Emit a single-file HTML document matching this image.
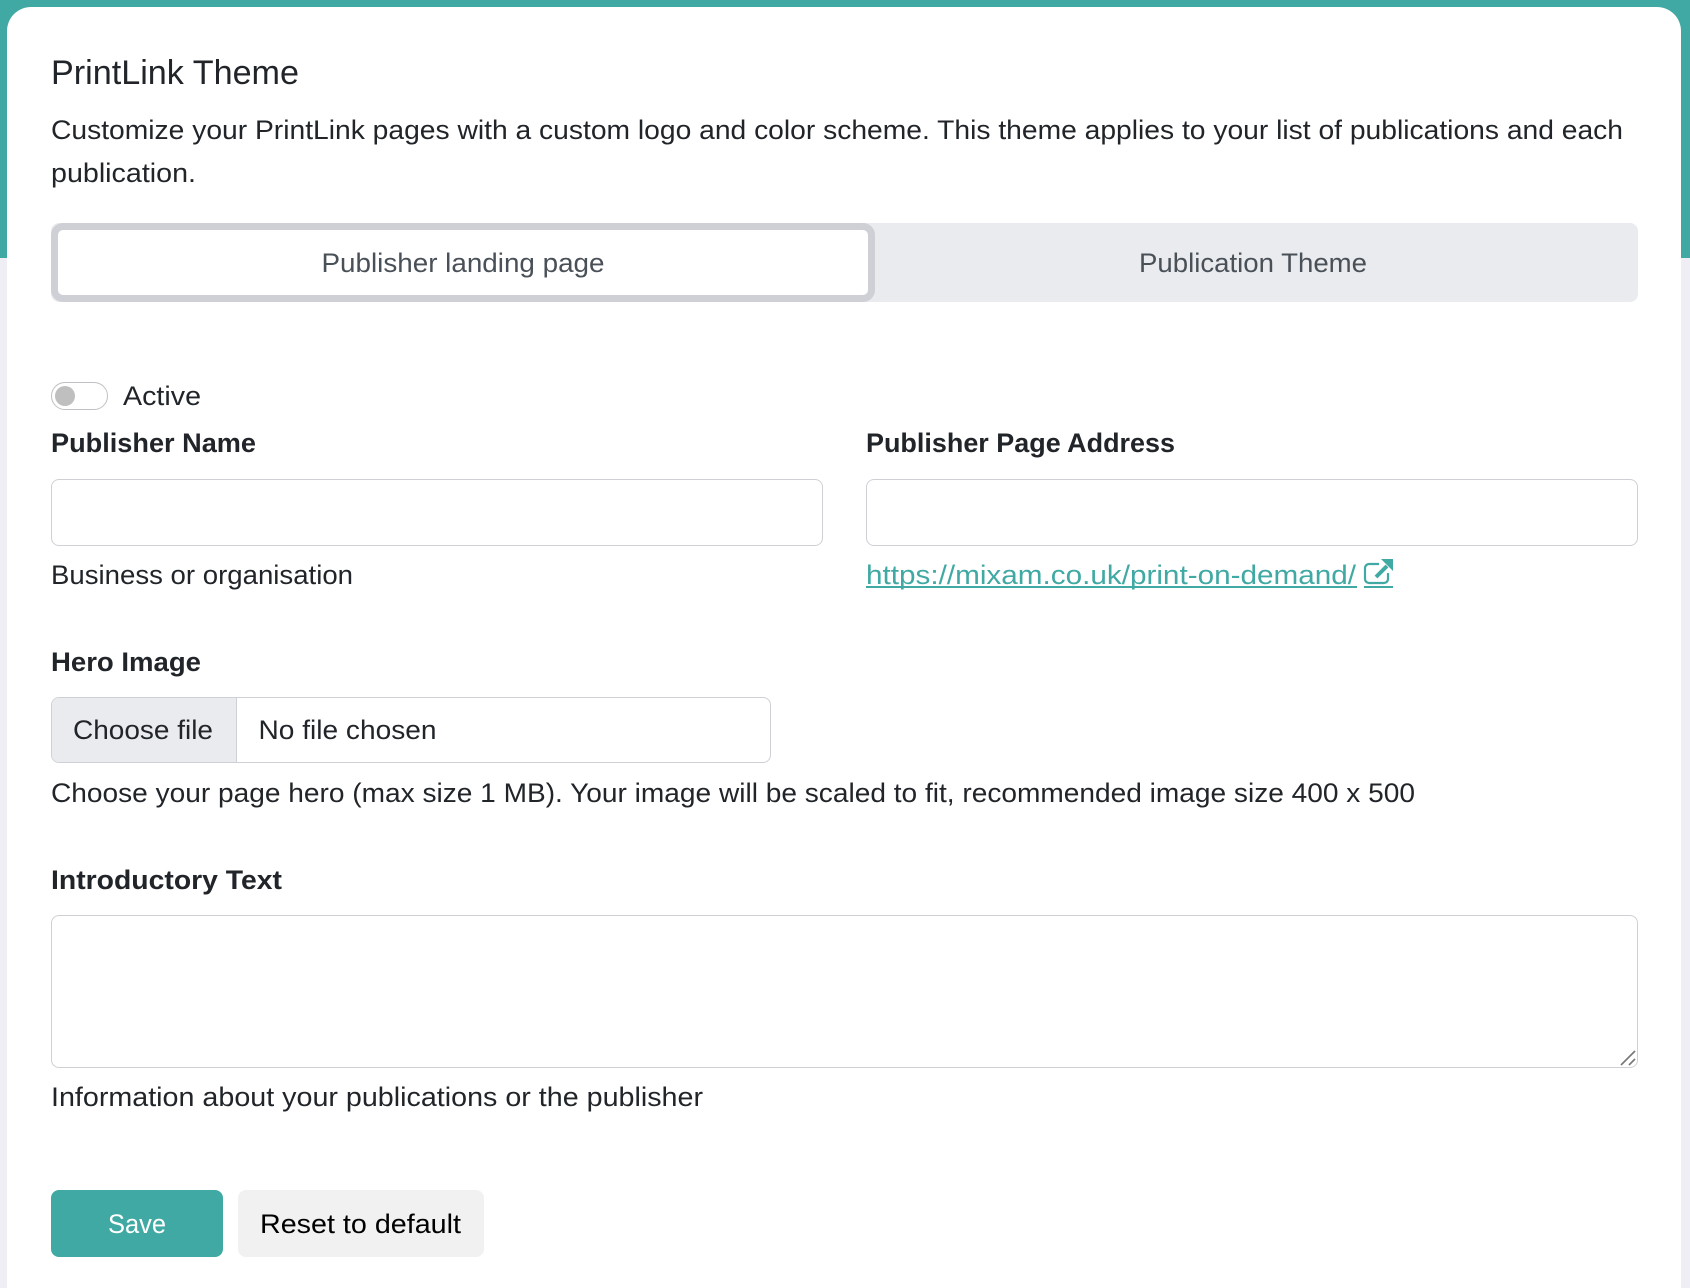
<!DOCTYPE html>
<html lang="en"><head><meta charset="utf-8"><title>PrintLink Theme</title>
<style>
html,body{margin:0;padding:0;width:1690px;height:1288px;overflow:hidden;background:#eeeef4}
*{box-sizing:border-box}
.a{position:absolute;display:block;margin:0;padding:0}
input,textarea,button{outline:0;font:inherit}
svg{position:absolute;left:0;top:0;pointer-events:none}
text{font-family:"Liberation Sans",sans-serif;font-size:27px;fill:#212529}
.b{font-weight:700}
</style></head><body>
<div class="a" style="left:0;top:0;width:1690px;height:258px;background:#40a9a3"></div>
<div class="a" style="left:7px;top:7px;width:1674px;height:1281px;background:#fff;border-radius:24px 24px 0 0"></div>

<div class="a" style="left:51px;top:223px;width:1587px;height:79px;background:#e9ebef;border-radius:8px"></div>
<div class="a" style="left:51px;top:223px;width:824px;height:79px;background:#fff;border:7px solid #ced0d5;border-radius:12px"></div>

<div class="a" style="left:51px;top:382px;width:57px;height:28px;border:1px solid #bfc0c5;border-radius:14px;background:#fff"></div>
<div class="a" style="left:55px;top:386px;width:20px;height:20px;border-radius:50%;background:#bfbfbf"></div>

<input class="a" aria-label="Publisher Name" style="left:51px;top:479px;width:772px;height:67px;border:1px solid #ced0d5;border-radius:8px;background:#fff">
<input class="a" aria-label="Publisher Page Address" style="left:866px;top:479px;width:772px;height:67px;border:1px solid #ced0d5;border-radius:8px;background:#fff">

<div class="a" style="left:51px;top:697px;width:720px;height:66px;border:1px solid #ced0d5;border-radius:8px;background:#fff;overflow:hidden"><div class="a" style="left:0;top:0;width:185px;height:64px;background:#e9ebef;border-right:1px solid #ced0d5"></div></div>

<textarea class="a" aria-label="Introductory Text" style="left:51px;top:915px;width:1587px;height:153px;border:1px solid #ced0d5;border-radius:8px;background:#fff;resize:none"></textarea>

<div class="a" style="left:51px;top:1190px;width:172px;height:67px;background:#40a9a3;border-radius:8px"></div>
<div class="a" style="left:238px;top:1190px;width:246px;height:67px;background:#f1f1f1;border-radius:8px"></div>

<svg width="1690" height="1288" viewBox="0 0 1690 1288" xmlns="http://www.w3.org/2000/svg">
<text x="51" y="84" style="font-size:34px" textLength="248" lengthAdjust="spacingAndGlyphs">PrintLink Theme</text>
<text x="51" y="139" textLength="1572" lengthAdjust="spacingAndGlyphs">Customize your PrintLink pages with a custom logo and color scheme. This theme applies to your list of publications and each</text>
<text x="51" y="182" textLength="145" lengthAdjust="spacingAndGlyphs">publication.</text>
<text x="321.5" y="272" style="fill:#495057" textLength="283" lengthAdjust="spacingAndGlyphs">Publisher landing page</text>
<text x="1139" y="272" style="fill:#495057" textLength="228" lengthAdjust="spacingAndGlyphs">Publication Theme</text>
<text x="123" y="405" textLength="78" lengthAdjust="spacingAndGlyphs">Active</text>
<text class="b" x="51" y="452" textLength="205" lengthAdjust="spacingAndGlyphs">Publisher Name</text>
<text class="b" x="866" y="452" textLength="309" lengthAdjust="spacingAndGlyphs">Publisher Page Address</text>
<text x="51" y="584" textLength="302" lengthAdjust="spacingAndGlyphs">Business or organisation</text>
<text x="866" y="584" style="fill:#40a9a3" textLength="490" lengthAdjust="spacingAndGlyphs">https://mixam.co.uk/print-on-demand/</text>
<rect x="866" y="586" width="491" height="2" fill="#40a9a3"/>
<rect x="1364" y="586" width="29" height="2" fill="#40a9a3"/>
<path d="M1379 564h-10a4 4 0 0 0-4 4v11a4 4 0 0 0 4 4h15a4 4 0 0 0 4-4v-6" fill="none" stroke="#40a9a3" stroke-width="2.2"/>
<path d="M1376 577l11-11" fill="none" stroke="#40a9a3" stroke-width="4"/>
<path d="M1381 559h12v12z" fill="#40a9a3"/>
<text class="b" x="51" y="671" textLength="150" lengthAdjust="spacingAndGlyphs">Hero Image</text>
<text x="73" y="739" textLength="140" lengthAdjust="spacingAndGlyphs">Choose file</text>
<text x="258.5" y="739" textLength="178" lengthAdjust="spacingAndGlyphs">No file chosen</text>
<text x="51" y="802" textLength="1364" lengthAdjust="spacingAndGlyphs">Choose your page hero (max size 1 MB). Your image will be scaled to fit, recommended image size 400 x 500</text>
<text class="b" x="51" y="889" textLength="231" lengthAdjust="spacingAndGlyphs">Introductory Text</text>
<text x="51" y="1106" textLength="652" lengthAdjust="spacingAndGlyphs">Information about your publications or the publisher</text>
<text x="108" y="1233" style="fill:#fff" textLength="58" lengthAdjust="spacingAndGlyphs">Save</text>
<text x="260" y="1233" style="fill:#000" textLength="201" lengthAdjust="spacingAndGlyphs">Reset to default</text>
<path d="M1621 1065L1635 1051M1629 1065L1635 1059" fill="none" stroke="#777" stroke-width="1.6"/>
</svg>
</body></html>
